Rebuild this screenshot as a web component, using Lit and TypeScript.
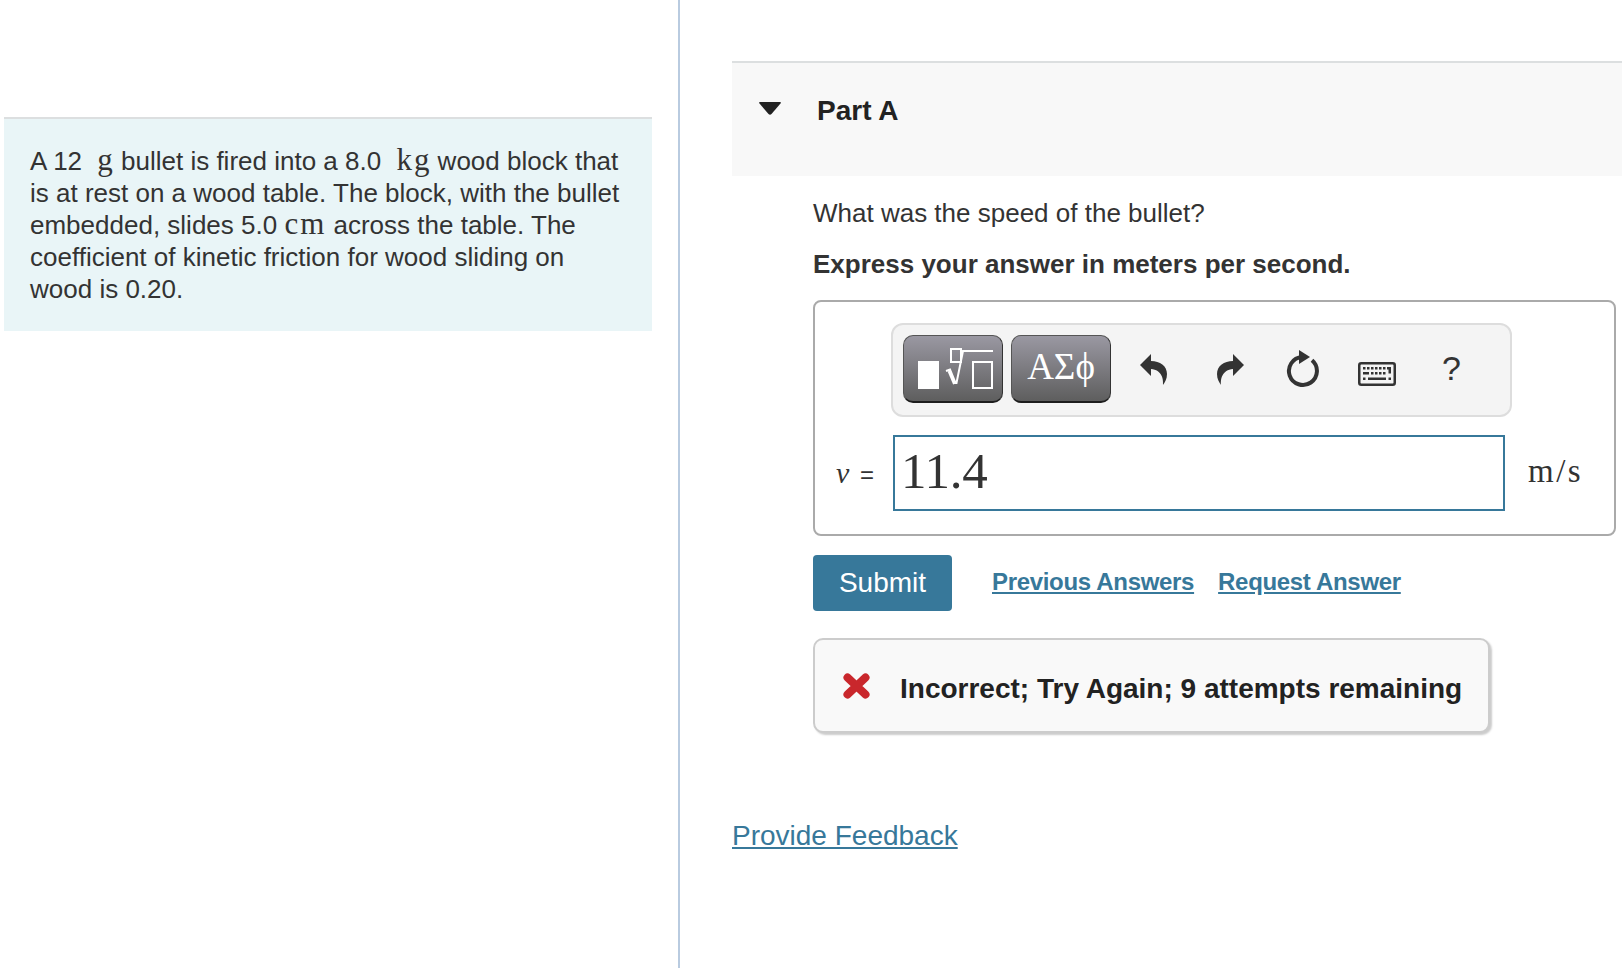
import { LitElement, html, css } from "lit";
import { customElement } from "lit/decorators.js";

@customElement("app-root")
export class AppRoot extends LitElement {
  static styles = css`
    :host { display: block; height: 968px; overflow: hidden; background: #fff; color: #333; font-family: "Liberation Sans", Arial, sans-serif; }
    .page { display: grid; grid-template-columns: 678px 2px 1fr; height: 968px; }
    .left { padding: 117px 26px 0 4px; }
    .divider { background: #b9cbe0; }
    .intro { border-top: 2px solid #dcdfe0; background: #e9f5f7; padding: 26px 26px; font-size: 26px; line-height: 32px; color: #333; }
    .line { height: 32px; white-space: nowrap; }
    .m { font-family: "Liberation Serif", serif; font-size: 31px; line-height: 0; }
    .g { padding: 0 1px 0 8px; }
    .kg { padding-left: 8px; margin-right: -1px; letter-spacing: 2px; }
    .cm { letter-spacing: 2px; }
    .right { padding: 61px 0 0 52px; min-width: 0; }
    .head { height: 115px; box-sizing: border-box; border-top: 2px solid #dcdfe0; background: #f8f8f8; padding: 32px 0 0 27px; display: flex; gap: 36px; font-size: 28px; font-weight: 700; line-height: 32px; color: #222; }
    .tri { margin-top: 7px; width: 22px; height: 13px; flex: none; }
    .body { padding: 21px 6px 0 81px; }
    .q { font-size: 26px; line-height: 32px; margin: 0; }
    .hint { font-size: 26px; line-height: 32px; margin: 19px 0 20px; font-weight: 700; }
    .box { height: 236px; box-sizing: border-box; border: 2px solid #aaa; border-radius: 8px; padding: 21px 0 0 76px; }
    .toolbar { width: 621px; height: 94px; box-sizing: border-box; border: 2px solid #ddd; border-radius: 12px; background: #f4f4f4; display: flex; align-items: center; padding: 0 0 2px 10px; }
    .btn { width: 100px; height: 68px; box-sizing: border-box; border: 1px solid #555; border-bottom: 2px solid #1d1d1d; border-right-color: #333; border-radius: 10px; background: linear-gradient(#9a98a2, #5e5e5e); display: flex; align-items: center; justify-content: center; margin-right: 8px; color: #fff; font-family: "Liberation Serif", serif; font-size: 37px; padding-bottom: 4px; flex: none; }
    .btn svg { display: block; margin: 11px 0 0 8px; }
    .undo { margin-left: 21px; }
    .redo { margin-left: 50px; }
    .reset { margin-left: 42px; }
    .kbd { margin-left: 38px; margin-top: 10px; }
    .help { margin-left: 46px; font-size: 34px; color: #333; line-height: 36px; margin-top: -2px; }
    .row { display: flex; align-items: center; margin: 18px 0 0 -76px; height: 76px; }
    .var { width: 78px; box-sizing: border-box; padding-left: 21px; font-size: 24px; white-space: nowrap; flex: none; }
    .var i { font-family: "Liberation Serif", serif; font-size: 30px; margin-right: 4px; }
    .input { width: 612px; height: 76px; box-sizing: border-box; border: 2px solid #37789a; font-family: "Liberation Serif", serif; font-size: 51px; letter-spacing: -0.2px; line-height: 68px; padding-left: 6px; color: #333; flex: none; }
    .unit { margin: -3px 0 0 23px; font-family: "Liberation Serif", serif; font-size: 33px; letter-spacing: 2.5px; }
    .actions { display: flex; align-items: center; margin-top: 19px; }
    .submit { width: 139px; height: 56px; background: #37789a; color: #fff; border-radius: 4px; display: flex; align-items: center; justify-content: center; font-size: 28px; }
    a { color: #37789a; text-decoration: underline; }
    .links { display: flex; gap: 24px; margin: -2px 0 0 40px; font-size: 24px; letter-spacing: -0.32px; font-weight: 700; }
    .fb { width: 677px; height: 95px; box-sizing: border-box; margin-top: 27px; border: 2px solid #ccc; border-radius: 10px; background: #f9f9f9; box-shadow: 2px 2px 2px #ccc; display: flex; align-items: center; padding: 4px 0 0 28px; font-size: 28px; font-weight: 700; color: #222; gap: 30px; white-space: nowrap; }
    .fb svg { flex: none; margin-top: -4px; }
    .fb span { margin-top: 2px; }
    .feedback { display: block; margin-top: 87px; font-size: 28px; line-height: 32px; width: max-content; }
    svg.i { display: block; flex: none; }
  `;

  render() {
    return html`<div class="page">
      <div class="left">
        <div class="intro">
          <div class="line">A 12 <span class="m g">g</span> bullet is fired into a 8.0 <span class="m kg">kg</span> wood block that</div>
          <div class="line">is at rest on a wood table. The block, with the bullet</div>
          <div class="line">embedded, slides 5.0 <span class="m cm">cm</span> across the table. The</div>
          <div class="line">coefficient of kinetic friction for wood sliding on</div>
          <div class="line">wood is 0.20.</div>
        </div>
      </div>
      <div class="divider"></div>
      <div class="right">
        <div class="head">
          <svg class="tri" viewBox="0 0 22 13"><path d="M1 0H21Q22.500 0 21.500 1.500L12.500 12Q11 13.500 9.500 12L0.500 1.500Q-0.500 0 1 0Z" fill="#222"/></svg>
          <span>Part A</span>
        </div>
        <div class="body">
          <p class="q">What was the speed of the bullet?</p>
          <p class="hint">Express your answer in meters per second.</p>
          <div class="box">
            <div class="toolbar">
              <div class="btn">
                <svg width="80" height="50" viewBox="0 0 80 50" fill="none" stroke="#fff" stroke-width="2">
                  <rect x="1" y="14" width="21" height="28" fill="#fff" stroke="none"/>
                  <rect x="34" y="2" width="10" height="13"/>
                  <path d="M29 24L33 22.500L38.500 36L39.500 36L46 4H76"/>
                  <path d="M32 24L37.500 37" stroke-width="3"/>
                  <rect x="56" y="15" width="19" height="26"/>
                </svg>
              </div>
              <div class="btn">ΑΣϕ</div>
              <svg class="i undo" width="27" height="31" viewBox="0 0 27 31"><path d="M0 11L11 0V7C20 7 27 12 27 20C27 25 25 28 23 31C23.5 25 22 16 11 15V22Z" fill="#333"/></svg>
              <svg class="i redo" width="27" height="31" viewBox="0 0 27 31"><path d="M27 11L16 0V7C7 7 0 12 0 20C0 25 2 28 4 31C3.5 25 5 16 16 15V22Z" fill="#333"/></svg>
              <svg class="i reset" width="34" height="38" viewBox="0 0 34 38"><path d="M26 10.3A14 14 0 1 1 16 7" fill="none" stroke="#333" stroke-width="4"/><path d="M13 0L24 7L13 14Z" fill="#333"/></svg>
              <svg class="i kbd" width="38" height="24" viewBox="0 0 38 24"><rect x="1.250" y="1.250" width="35.500" height="21.500" rx="2" fill="none" stroke="#333" stroke-width="2.500"/><path d="M5 5h2.500v2.500H5zM9 5h2.500v2.500H9zM13 5h2.500v2.500h-2.500zM17 5h2.500v2.500h-2.500zM21 5h2.500v2.500h-2.500zM25 5h2.500v2.500h-2.500zM29 5h4v6.500h-2.500V7.500h-1.500zM5 10h6v2.500H5zM13 10h2.500v2.500h-2.500zM17 10h2.500v2.500h-2.500zM21 10h2.500v2.500h-2.500zM25 10h2.500v2.500h-2.500zM5 15.500h2.500v2.500H5zM10 15.500h18v2.500H10zM30.500 15.500h2.500v2.500h-2.500z" fill="#333"/></svg>
              <span class="help">?</span>
            </div>
            <div class="row">
              <div class="var"><i>v</i> =</div>
              <div class="input">11.4</div>
              <div class="unit">m/s</div>
            </div>
          </div>
          <div class="actions">
            <div class="submit">Submit</div>
            <div class="links"><a>Previous Answers</a><a>Request Answer</a></div>
          </div>
          <div class="fb">
            <svg width="27" height="26" viewBox="0 0 27 26"><path d="M4.5 4.5L22.5 21.500M22.500 4.500L4.500 21.500" stroke="#c9272c" stroke-width="8" stroke-linecap="round" fill="none"/></svg>
            <span>Incorrect; Try Again; 9 attempts remaining</span>
          </div>
        </div>
        <a class="feedback">Provide Feedback</a>
      </div>
    </div>`;
  }
}
